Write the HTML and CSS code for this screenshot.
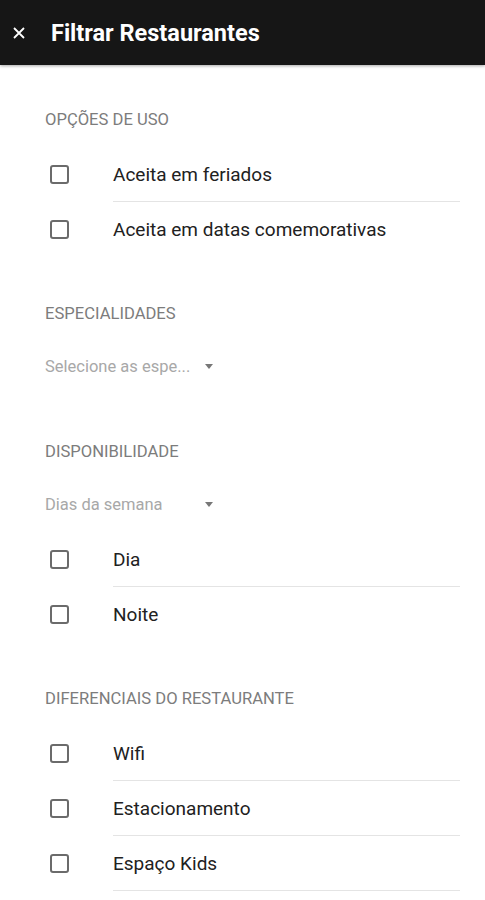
FILE: index.html
```html
<!DOCTYPE html>
<html lang="pt-BR">
<head>
    <meta charset="UTF-8">
    <meta name="viewport" content="width=device-width, initial-scale=1.0">
    <title>Filtrar Restaurantes</title>
    <link rel="stylesheet" href="styles.css">
</head>
<body>
    <header class="toolbar">
        <button class="close" aria-label="Fechar">
            <svg width="12" height="12" viewBox="0 0 12 12">
                <path d="M1 1 L11 11 M11 1 L1 11" stroke="#fff" stroke-width="1.8" fill="none"/>
            </svg>
        </button>
        <h1>Filtrar Restaurantes</h1>
    </header>

    <main class="filters">
        <section class="section">
            <h2 class="section-title">Opções de uso</h2>
            <ul class="options closed">
                <li class="option"><span class="box"></span><span class="label">Aceita em feriados</span></li>
                <li class="option"><span class="box"></span><span class="label">Aceita em datas comemorativas</span></li>
            </ul>
        </section>

        <section class="section">
            <h2 class="section-title">Especialidades</h2>
            <div class="select select-spaced">
                <span>Selecione as espe...</span>
                <span class="arrow"></span>
            </div>
        </section>

        <section class="section">
            <h2 class="section-title">Disponibilidade</h2>
            <div class="select">
                <span>Dias da semana</span>
                <span class="arrow"></span>
            </div>
            <ul class="options closed after-select">
                <li class="option"><span class="box"></span><span class="label">Dia</span></li>
                <li class="option"><span class="box"></span><span class="label">Noite</span></li>
            </ul>
        </section>

        <section class="section">
            <h2 class="section-title">Diferenciais do restaurante</h2>
            <ul class="options">
                <li class="option"><span class="box"></span><span class="label">Wifi</span></li>
                <li class="option"><span class="box"></span><span class="label">Estacionamento</span></li>
                <li class="option"><span class="box"></span><span class="label">Espaço Kids</span></li>
            </ul>
        </section>
    </main>
</body>
</html>
```

FILE: styles.css
```css
body {
    margin: 0;
    font-family: Roboto, "Noto Sans", Arial, sans-serif;
    background-color: #fff;
    color: #212121;
}
.toolbar {
    height: 65px;
    background-color: #161616;
    display: flex;
    align-items: center;
    box-shadow: 0 1px 3px rgba(0, 0, 0, 0.35);
    position: relative;
}
.close {
    background: none;
    border: none;
    padding: 0;
    margin-left: 13px;
    width: 12px;
    height: 12px;
    display: flex;
    cursor: pointer;
}
.toolbar h1 {
    margin: 0 0 0 26px;
    font-size: 23.5px;
    font-weight: 700;
    color: #fff;
}
.filters {
    padding: 0 25px 0 45px;
}
.section {
    padding-top: 47px;
}
.section:first-child {
    padding-top: 45px;
}
.section-title {
    margin: 0;
    font-size: 16.6px;
    line-height: 20px;
    font-weight: 400;
    color: #7c7c7c;
    text-transform: uppercase;
}
.options {
    list-style: none;
    margin: 17px 0 0;
    padding: 0;
}
.options.after-select {
    margin-top: 0;
}
.option {
    display: flex;
    align-items: center;
    height: 55px;
}
.box {
    box-sizing: border-box;
    width: 19px;
    height: 19px;
    margin-left: 5px;
    border: 2px solid #6b6b6b;
    border-radius: 3px;
    flex-shrink: 0;
}
.label {
    margin-left: 44px;
    flex: 1;
    height: 100%;
    display: flex;
    align-items: center;
    font-size: 19px;
    border-bottom: 1px solid #e4e4e4;
    box-sizing: border-box;
}
.options.closed .option:last-child .label {
    border-bottom: none;
}
.select {
    width: 168px;
    height: 40px;
    margin: 22px 0 8px;
    display: flex;
    align-items: center;
    justify-content: space-between;
    font-size: 16.5px;
    color: #a8a8a8;
}
.select-spaced {
    margin-bottom: 9px;
}
.arrow {
    width: 0;
    height: 0;
    border-left: 4.5px solid transparent;
    border-right: 4.5px solid transparent;
    border-top: 5px solid #777;
}
```
